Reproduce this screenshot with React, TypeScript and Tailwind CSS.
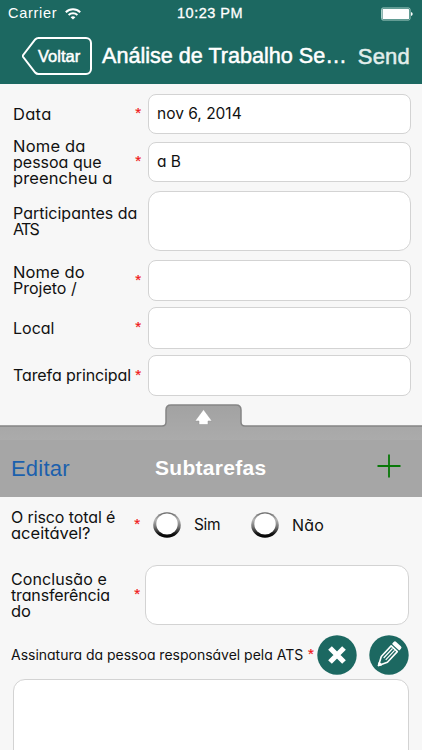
import clsx from "clsx";
import React from "react";

type Line = { text: string; className?: string };

type FieldProps = {
  lines: Line[];
  value?: string;
  required?: boolean;
  className?: string;
  inputClassName?: string;
};

const gothic =
  "font-['Century_Gothic','Inter',sans-serif] [font-feature-settings:'cv11'] text-[#111]";

const Required = ({ className }: { className?: string }) => (
  <span
    className={clsx(
      "shrink-0 pb-0.5 font-['Liberation_Sans',sans-serif] text-[15px] leading-4 text-[#f01414] [-webkit-text-stroke:0.2px_#f01414]",
      className
    )}
  >
    *
  </span>
);

const Label = ({ lines }: { lines: Line[] }) => (
  <div className="flex-1 pb-px text-[15.5px] leading-4 whitespace-nowrap">
    {lines.map((line) => (
      <div key={line.text} className={line.className}>
        {line.text}
      </div>
    ))}
  </div>
);

const Field = ({ lines, value, required, className, inputClassName }: FieldProps) => (
  <div className={clsx("flex items-center", className)}>
    <div className="flex w-[135px] shrink-0 items-center">
      <Label lines={lines} />
      {required && <Required className="-ml-2 mr-[7px]" />}
    </div>
    <div
      className={clsx(
        "flex h-full flex-1 items-center border border-[#d3d3d3] bg-white pl-2 text-[15.5px]",
        inputClassName ?? "rounded-lg"
      )}
    >
      {value}
    </div>
  </div>
);

const Radio = ({ id }: { id: string }) => (
  <svg viewBox="0 0 28 28" className="h-7 w-7 shrink-0">
    <defs>
      <linearGradient id={id} x1="0" y1="0" x2="0" y2="1">
        <stop offset="0" stopColor="#666" />
        <stop offset="0.3" stopColor="#b5b5b5" />
        <stop offset="0.6" stopColor="#6c6c6c" />
        <stop offset="0.85" stopColor="#111" />
        <stop offset="1" stopColor="#000" />
      </linearGradient>
    </defs>
    <ellipse cx="14" cy="14" rx="13.8" ry="12.8" fill={`url(#${id})`} />
    <ellipse cx="14" cy="13" rx="10.7" ry="10.5" fill="#fff" />
  </svg>
);

const StatusBar = () => (
  <div className="flex h-7 items-center pr-2 pl-2 text-[14.5px]">
    <span className="w-[49px] tracking-[0.7px] whitespace-nowrap">Carrier</span>
    <svg viewBox="0 0 16 12" className="ml-2 h-3 w-4" fill="none" stroke="#fff" strokeWidth="2">
      <path d="M.8 4.2a10.4 10.4 0 0 1 14.4 0" />
      <path d="M3.6 7.1a6.4 6.4 0 0 1 8.8 0" />
      <path d="M8 11.6 5.6 9.2a3.6 3.6 0 0 1 4.8 0Z" fill="#fff" stroke="none" />
    </svg>
    <span className="ml-24 tracking-[0.5px] whitespace-nowrap [-webkit-text-stroke:0.3px_#fff]">
      10:23 PM
    </span>
    <svg viewBox="0 0 34 14" className="ml-auto h-3.5 w-[34px]">
      <rect x="1.5" y="1" width="28.5" height="12" rx="1.5" fill="none" stroke="#a9d0c8" />
      <rect x="2.5" y="2" width="26.5" height="10" rx=".5" fill="#fff" />
      <path d="M31 5v4q1.7-.6 1.7-2T31 5Z" fill="#fff" />
    </svg>
  </div>
);

const NavBar = () => (
  <div className="flex h-14 items-center pr-3 pl-[22px]">
    <button className="relative h-[38px] w-[70px] text-left">
      <svg viewBox="0 0 70 38" className="absolute inset-0" fill="none" stroke="#fff" strokeWidth="2">
        <path d="M16.5 1H64a5 5 0 0 1 5 5v26a5 5 0 0 1-5 5H16.5q-2 0-3.3-1.5L1 19.8q-.5-.8 0-1.6L13.2 2.5Q14.5 1 16.5 1Z" />
      </svg>
      <span className="relative ml-4 text-[16.5px] [-webkit-text-stroke:0.5px_#fff]">Voltar</span>
    </button>
    <h1 className="ml-2.5 w-[246px] text-[21.6px] whitespace-nowrap [-webkit-text-stroke:0.5px_#fff]">
      Análise de Trabalho Se…
    </h1>
    <span className="ml-auto text-[22px] tracking-[0.2px] text-[#e2eeec] [-webkit-text-stroke:0.5px_#e2eeec]">
      Send
    </span>
  </div>
);

const SubtaskBar = () => (
  <div className="mt-2 h-[93px]">
    <svg viewBox="0 0 422 36" className="block h-9 w-full">
      <defs>
        <linearGradient id="bar" x1="0" y1="0" x2="0" y2="1">
          <stop offset="0" stopColor="#a2a2a2" />
          <stop offset="1" stopColor="#ababab" />
        </linearGradient>
      </defs>
      <path
        d="M0 22H162Q166 22 166 18V6Q166 1 171 1H236Q241 1 241 6V18Q241 22 245 22H422V36H0Z"
        fill="url(#bar)"
      />
      <path
        d="M0 22H162Q166 22 166 18V6Q166 1 171 1H236Q241 1 241 6V18Q241 22 245 22H422"
        fill="none"
        stroke="#858585"
        strokeWidth="1.5"
      />
      <path d="m203.5 5.5 8.5 11.5h-4v3.5h-9V17h-4Z" fill="#fff" stroke="#929292" strokeWidth=".5" />
    </svg>
    <div className="flex h-[57px] items-center bg-[#a6a6a6] px-[11px] pb-px">
      <span className="w-36 text-[22px] tracking-[0.2px] text-[#1b60ad]">Editar</span>
      <span className="text-[21px] font-bold tracking-[0.3px] text-white">Subtarefas</span>
      <svg viewBox="0 0 24 24" className="mr-2.5 mb-[5px] ml-auto h-6 w-6" stroke="#087808" strokeWidth="1.8">
        <path d="M12 .5v23M.5 12h23" />
      </svg>
    </div>
  </div>
);

const App = () => {
  return (
    <div className="h-[750px] w-[422px] overflow-hidden bg-[#f7f7f7]">
      <header className="h-[84px] bg-[#1c6861] font-['Liberation_Sans',sans-serif] text-white">
        <StatusBar />
        <NavBar />
      </header>

      <section className={clsx("h-[312px] pt-[10px] pr-[11px] pl-[13px]", gothic)}>
        <Field
          className="h-10"
          lines={[{ text: "Data", className: "text-[16.5px] tracking-[0.3px]" }]}
          value="nov 6, 2014"
          required
        />
        <Field
          className="mt-2 h-10"
          lines={[
            { text: "Nome da", className: "text-[16.5px] tracking-[0.2px]" },
            { text: "pessoa que", className: "text-[16px]" },
            { text: "preencheu a", className: "text-[16.5px] tracking-[0.1px]" },
          ]}
          value="a B"
          required
        />
        <Field
          className="mt-[9px] h-[60px]"
          lines={[
            { text: "Participantes da", className: "text-[16px]" },
            { text: "ATS", className: "text-[16px] tracking-[-1.8px]" },
          ]}
          inputClassName="rounded-xl"
        />
        <Field
          className="mt-[9px] h-[41px]"
          lines={[
            { text: "Nome do", className: "text-[16.5px] tracking-[0.1px]" },
            { text: "Projeto /", className: "text-[16px]" },
          ]}
          required
        />
        <Field
          className="mt-1.5 h-[42px]"
          lines={[{ text: "Local", className: "text-[16px]" }]}
          required
        />
        <Field
          className="mt-1.5 h-[41px]"
          lines={[{ text: "Tarefa principal", className: "text-[16px] tracking-[-0.1px]" }]}
          required
        />
      </section>

      <div className="font-['Liberation_Sans',sans-serif]">
        <SubtaskBar />
      </div>

      <section className={clsx("pr-[13px] pl-[11px]", gothic)}>
        <div className="flex h-[56px] items-center">
          <div className="flex w-[142px] items-center">
            <Label
              lines={[
                { text: "O risco total é", className: "text-[16px] tracking-[-0.1px]" },
                { text: "aceitável?", className: "text-[16.5px]" },
              ]}
            />
            <Required className="-ml-2 mr-[13px]" />
          </div>
          <Radio id="yes" />
          <span className="ml-[13px] w-[57px] text-[15.5px] tracking-[-0.4px]">Sim</span>
          <Radio id="no" />
          <span className="ml-[13px] pb-px text-[16px] tracking-[0.2px]">Não</span>
        </div>
        <div className="mt-3 flex h-[60px] items-center">
          <div className="flex w-[134px] shrink-0 items-center">
            <Label
              lines={[
                { text: "Conclusão e", className: "text-[16px] tracking-[0.1px]" },
                { text: "transferência", className: "text-[16px] tracking-[-0.15px]" },
                { text: "do", className: "text-[16.5px]" },
              ]}
            />
            <Required className="-ml-2 mr-[5px]" />
          </div>
          <div className="h-full flex-1 rounded-xl border border-[#d3d3d3] bg-white" />
        </div>
        <div className="mt-2.5 flex h-10 items-center">
          <span className="w-[297px] shrink-0 pb-0.5 text-[14px] tracking-[-0.01px] whitespace-nowrap">
            Assinatura da pessoa responsável pela ATS
          </span>
          <Required className="w-[9px]" />
          <button className="h-10 w-10 shrink-0">
            <svg viewBox="0 0 40 40">
              <circle cx="20" cy="20" r="19.7" fill="#1c6861" />
              <path d="m13 13 14 14M27 13 13 27" stroke="#fff" strokeWidth="5.2" />
            </svg>
          </button>
          <button className="ml-3 h-10 w-10 shrink-0">
            <svg viewBox="0 0 40 40">
              <circle cx="20" cy="20" r="19.7" fill="#1c6861" />
              <g
                transform="translate(-.9 .3) rotate(43 20 20)"
                fill="none"
                stroke="#fff"
                strokeWidth="1.6"
                strokeLinejoin="round"
              >
                <path d="M15.8 11v14.5L20 34l4.2-8.5V11Z" />
                <path d="M18.6 12v13M21.4 12v13" strokeWidth="1.2" />
                <path d="M15.8 8.2V6.5q0-1 1-1h6.4q1 0 1 1v1.7Z" fill="#fff" />
                <path d="m18.6 31.5 1.4 2.5 1.4-2.5Z" fill="#fff" />
              </g>
            </svg>
          </button>
        </div>
        <div className="mt-1 ml-[2px] h-24 rounded-xl border border-[#d3d3d3] bg-white" />
      </section>
    </div>
  );
};

export default App;
